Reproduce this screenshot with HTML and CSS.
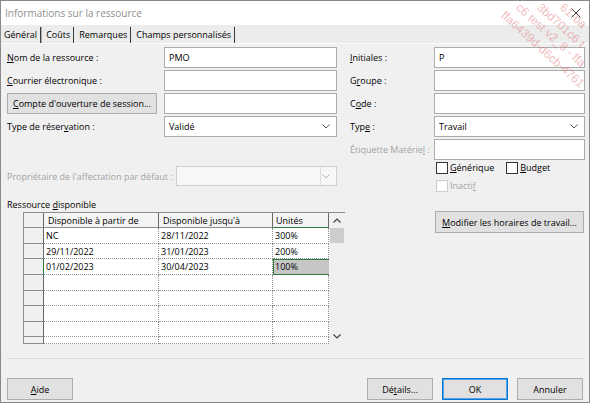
FILE: index.html
```html
<!DOCTYPE html>
<html lang="fr">
<head>
<meta charset="utf-8">
<title>Informations sur la ressource</title>
<link rel="stylesheet" href="styles.css">
</head>
<body>
<div class="window">
  <div class="titlebar">
    <span class="title">Informations sur la ressource</span>
    <svg class="close" width="10" height="10" viewBox="0 0 10 10"><path d="M0.5 0.5L9.5 9.5M9.5 0.5L0.5 9.5" stroke="#3a3a3a" stroke-width="1" fill="none"/></svg>
  </div>
  <div class="tabs">
    <div class="tab tab-active">Général</div>
    <div class="tab">Coûts</div>
    <div class="tab">Remarques</div>
    <div class="tab">Champs personnalisés</div>
  </div>
  <div class="main">
    <div class="col-left">
      <div class="form form-left">
        <span class="lbl"><u>N</u>om de la ressource :</span>
        <div class="field">PMO</div>
        <span class="lbl"><u>C</u>ourrier électronique :</span>
        <div class="field"></div>
        <div class="btn btn-account"><u>C</u>ompte d'ouverture de session...</div>
        <div class="field"></div>
        <span class="lbl">Type de réser<u>v</u>ation :</span>
        <div class="field select"><span>Validé</span><svg class="chev" width="8" height="5" viewBox="0 0 8 5"><path d="M0.5 0.5L4 4L7.5 0.5" stroke="#5a5a5a" stroke-width="1" fill="none"/></svg></div>
      </div>
      <div class="owner">
        <span class="lbl disabled">Propriétaire de l'affectation par défaut :</span>
        <div class="field select field-disabled"><span class="dd-divider"></span><svg class="chev" width="8" height="5" viewBox="0 0 8 5"><path d="M0.5 0.5L4 4L7.5 0.5" stroke="#b0b0b0" stroke-width="1" fill="none"/></svg></div>
      </div>
      <div class="section-label">Ressource <u>d</u>isponible</div>
      <div class="sheet">
        <div class="sheet-grid">
          <div class="corner"></div>
          <div class="colhead">Disponible à partir de</div>
          <div class="colhead">Disponible jusqu'à</div>
          <div class="colhead colhead-active">Unités</div>

          <div class="rowhead"></div>
          <div class="cell">NC</div>
          <div class="cell">28/11/2022</div>
          <div class="cell">300%</div>

          <div class="rowhead"></div>
          <div class="cell">29/11/2022</div>
          <div class="cell">31/01/2023</div>
          <div class="cell">200%</div>

          <div class="rowhead rowhead-active"></div>
          <div class="cell">01/02/2023</div>
          <div class="cell">30/04/2023</div>
          <div class="cell cell-selected">100%</div>

          <div class="rowhead"></div><div class="cell"></div><div class="cell"></div><div class="cell"></div>
          <div class="rowhead"></div><div class="cell"></div><div class="cell"></div><div class="cell"></div>
          <div class="rowhead"></div><div class="cell"></div><div class="cell"></div><div class="cell"></div>
          <div class="rowhead"></div><div class="cell"></div><div class="cell"></div><div class="cell"></div>
          <div class="rowhead"></div><div class="cell"></div><div class="cell"></div><div class="cell"></div>
        </div>
        <div class="scrollbar">
          <div class="sb-arrow"><svg width="8" height="5" viewBox="0 0 8 5"><path d="M0.5 4.5L4 1L7.5 4.5" stroke="#404040" stroke-width="1.2" fill="none"/></svg></div>
          <div class="sb-thumb"></div>
          <div class="sb-track"></div>
          <div class="sb-arrow"><svg width="8" height="5" viewBox="0 0 8 5"><path d="M0.5 0.5L4 4L7.5 0.5" stroke="#404040" stroke-width="1.2" fill="none"/></svg></div>
        </div>
      </div>
    </div>
    <div class="col-right">
      <div class="form form-right">
        <span class="lbl"><u>I</u>nitiales :</span>
        <div class="field">P</div>
        <span class="lbl">G<u>r</u>oupe :</span>
        <div class="field"></div>
        <span class="lbl">C<u>o</u>de :</span>
        <div class="field"></div>
        <span class="lbl">Typ<u>e</u> :</span>
        <div class="field select"><span>Travail</span><svg class="chev" width="8" height="5" viewBox="0 0 8 5"><path d="M0.5 0.5L4 4L7.5 0.5" stroke="#5a5a5a" stroke-width="1" fill="none"/></svg></div>
        <span class="lbl disabled">Étiquette Matérie<u>l</u> :</span>
        <div class="field"></div>
      </div>
      <div class="checks">
        <div class="check"><span class="box"></span><span><u>G</u>énérique</span></div>
        <div class="check check-budget"><span class="box"></span><span><u>B</u>udget</span></div>
      </div>
      <div class="checks checks-second">
        <div class="check disabled"><span class="box box-disabled"></span><span>Inacti<u>f</u></span></div>
      </div>
      <div class="btn btn-hours"><u>M</u>odifier les horaires de travail...</div>
    </div>
  </div>
  <div class="separator"></div>
  <div class="footer">
    <div class="btn btn-foot"><u>A</u>ide</div>
    <div class="spacer"></div>
    <div class="btn btn-foot">Dé<u>t</u>ails...</div>
    <div class="btn btn-foot btn-default">OK</div>
    <div class="btn btn-foot">Annuler</div>
  </div>
  <div class="watermark">
    <span class="wm wm1">ffa6439d-d6cb-4761</span>
    <span class="wm wm2">c6 test v2_8 - ffa</span>
    <span class="wm wm3">3bd701c6 t</span>
    <span class="wm wm4">61-ba</span>
  </div>
</div>
</body>
</html>
```

FILE: styles.css
```css
* { box-sizing: border-box; }
html, body { margin: 0; padding: 0; }
body {
  width: 590px;
  height: 403px;
  overflow: hidden;
  background: #f0f0f0;
  font-family: "Open Sans", "Noto Sans", sans-serif;
  font-size: 9px;
  color: #000;
}
u { text-decoration-thickness: 1px; text-underline-offset: 1px; }

.window {
  position: relative;
  width: 590px;
  height: 403px;
  border: 1px solid #8a8a8a;
  background: #f0f0f0;
  overflow: hidden;
  display: flex;
  flex-direction: column;
}

.titlebar {
  height: 24px;
  flex: none;
  background: #fff;
  display: flex;
  align-items: center;
  padding: 0 8px 0 4px;
}
.title { font-size: 10px; color: #8f8f8f; }
.close { margin-left: auto; }

.tabs {
  height: 19px;
  flex: none;
  display: flex;
  padding-left: 2px;
  background: #ececec;
  border-bottom: 1px solid #fbfbfb;
}
.tab {
  margin-top: 2px;
  height: 16px;
  line-height: 16px;
  padding: 0 3px 0 5px;
  border-right: 1px solid #3c3c3c;
  white-space: nowrap;
}
.tab-active { padding: 0 3px 0 1px; box-shadow: 1px 0 0 #a8a8a8; }

.main {
  flex: none;
  display: flex;
  padding: 3px 0 0 6px;
}
.col-left { width: 340px; display: flex; flex-direction: column; }
.col-right { width: 235px; margin-left: 3px; display: flex; flex-direction: column; }

.form { display: grid; grid-auto-rows: 21px; row-gap: 2px; align-items: center; }
.form-left { grid-template-columns: 157px 173px; }
.form-right { grid-template-columns: 84px 151px; }

.lbl { line-height: 15px; white-space: nowrap; }
.disabled { color: #a3a3a3; }

.field {
  height: 21px;
  background: #fff;
  border: 1px solid #acacac;
  padding-left: 4px;
  display: flex;
  align-items: center;
  white-space: nowrap;
}
.select { justify-content: space-between; padding-right: 6px; }
.field-disabled {
  position: relative;
  height: 20px;
  width: 161px;
  background: #f7f7f7;
  border-color: #cfcfcf;
  justify-content: flex-end;
}
.dd-divider {
  position: absolute;
  left: 143px;
  top: 0;
  bottom: 0;
  border-left: 1px solid #dcdcdc;
}

.btn {
  background: #e1e1e1;
  border: 1px solid #adadad;
  display: flex;
  align-items: center;
  justify-content: center;
  white-space: nowrap;
}
.btn-account { width: 150px; height: 21px; }

.owner {
  width: 330px;
  margin-top: 29px;
  height: 20px;
  display: flex;
  align-items: center;
  justify-content: space-between;
}

.section-label { margin-top: 11px; line-height: 15px; }

.sheet {
  margin-left: 16px;
  width: 322px;
  height: 132px;
  display: flex;
}
.sheet-grid {
  display: grid;
  grid-template-columns: 20px 115px 114px 56px;
  grid-template-rows: 15px 16px 15px 16px 16px 15px 16px 15px 7px;
  border-top: 1px solid #8d8d8d;
  border-left: 1px solid #8d8d8d;
  overflow: hidden;
}
.corner, .rowhead {
  background: #f0f0f0;
  border-right: 1px solid #6a6a6a;
  border-bottom: 1px solid #8d8d8d;
}
.colhead {
  background: #f4f4f4;
  border-right: 1px solid #6a6a6a;
  border-bottom: 1px solid #8d8d8d;
  padding-left: 4px;
  display: flex;
  align-items: center;
  white-space: nowrap;
}
.colhead-active { border-bottom: 1px solid #2f7d3c; padding-left: 3px; }
.rowhead-active { border-right: 1px solid #2f7d3c; }
.cell {
  background: #fff;
  border-right: 1px dotted #8f8f8f;
  border-bottom: 1px dotted #8f8f8f;
  padding-left: 2px;
  display: flex;
  align-items: center;
  white-space: nowrap;
}
.cell-selected {
  background: #c6c6c6;
  border-bottom: 1px solid #2f7d3c;
  border-right: none;
  box-shadow: inset 1px 1px 0 #2f7d3c;
}

.scrollbar {
  width: 16px;
  border-top: 1px solid #8d8d8d;
  background: #f0f0f0;
  display: flex;
  flex-direction: column;
}
.sb-arrow {
  height: 15px;
  flex: none;
  display: flex;
  align-items: center;
  justify-content: center;
}
.sb-thumb { height: 15px; margin: 0 1px; background: #cdcdcd; flex: none; }
.sb-track { flex: 1; }

.checks {
  margin-top: 1px;
  height: 13px;
  padding-left: 86px;
  display: flex;
  align-items: center;
}
.checks-second { margin-top: 5px; }
.check { display: flex; align-items: center; gap: 2px; white-space: nowrap; }
.check-budget { margin-left: 12px; }
.box {
  width: 12px;
  height: 12px;
  border: 1px solid #333;
  background: #fff;
  flex: none;
}
.box-disabled { border-color: #cccccc; }

.btn-hours { margin-top: 19px; margin-left: 85px; width: 149px; height: 22px; }

.separator {
  flex: none;
  margin: 14px 6px 0 6px;
  height: 1px;
  background: #dadada;
}

.footer {
  flex: none;
  margin-top: 19px;
  padding: 0 6px;
  display: flex;
  gap: 9px;
}
.btn-foot { width: 66px; height: 22px; }
.spacer { flex: 1; }
.btn-default { border-color: #0078d7; box-shadow: inset 0 0 0 1px #5a9fe0; }

.watermark { position: absolute; inset: 0; pointer-events: none; }
.wm {
  position: absolute;
  transform: rotate(42deg);
  transform-origin: 0 0;
  font-family: "Liberation Sans", Arial, sans-serif;
  font-size: 12px;
  line-height: 12px;
  color: rgba(222, 104, 104, 0.45);
  white-space: nowrap;
}
.wm1 { left: 506px; top: 8px; }
.wm2 { left: 521px; top: 0; }
.wm3 { left: 542px; top: 0; }
.wm4 { left: 565px; top: 0; }
```
